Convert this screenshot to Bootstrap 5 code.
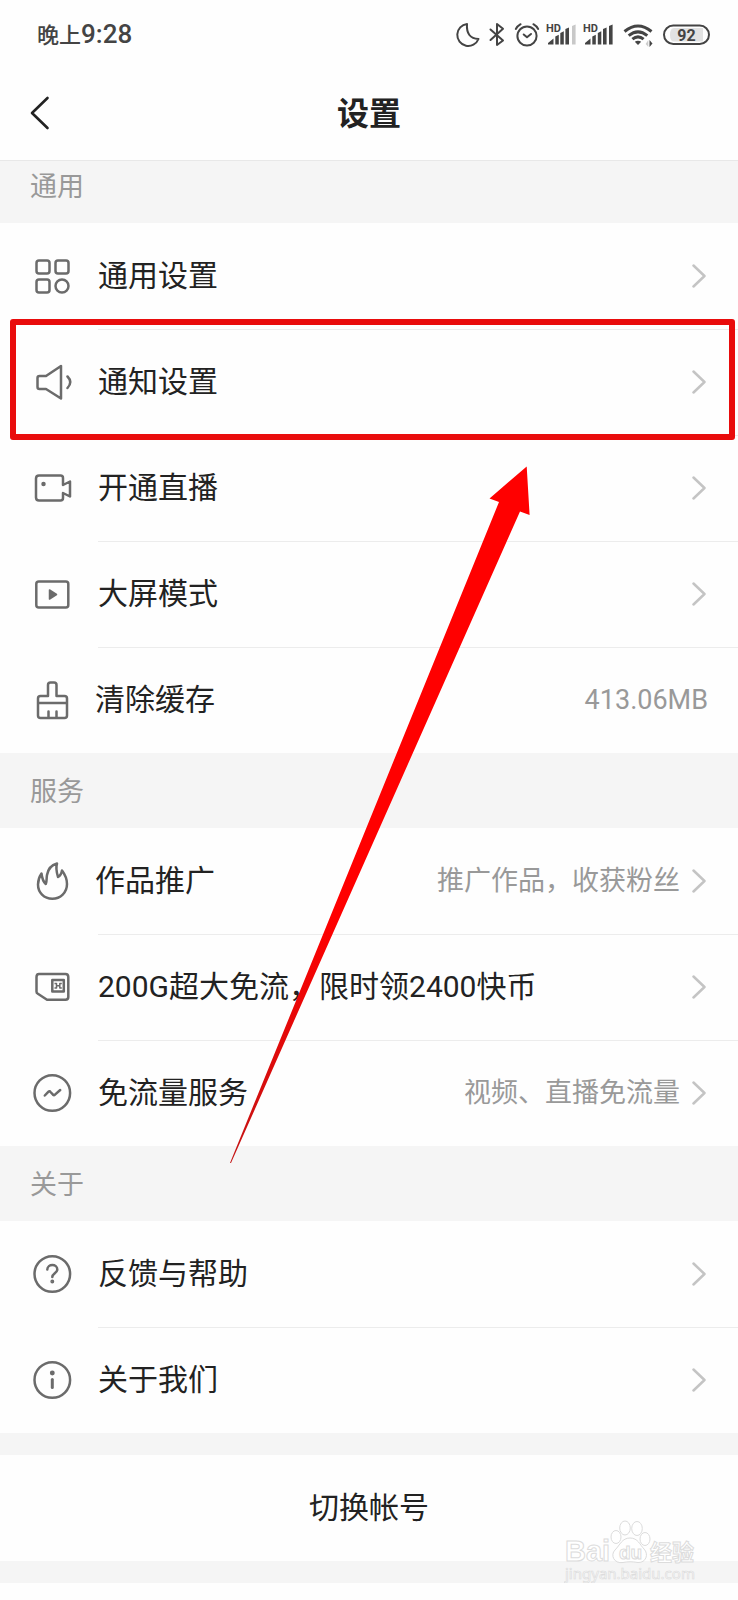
<!DOCTYPE html>
<html lang="zh-CN">
<head>
<meta charset="utf-8">
<meta name="viewport" content="width=device-width, initial-scale=1">
<title>设置</title>
<link href="https://cdn.jsdelivr.net/npm/bootstrap@5.3.0/dist/css/bootstrap.min.css" rel="stylesheet">
<style>
  body { font-family: Roboto, "Noto Sans CJK SC", sans-serif; color: #222; background: #fefefe; }
  svg { display: block; flex: none; }
  .status-bar { height: 66px; padding: 4px 28px 0 37px; color: #444; }
  .clock { font-size: 22px; font-weight: 500; line-height: 30px; }
  .clock-digits { font-size: 26px; }
  .title-bar { height: 94px; }
  .title-bar h1 { font-size: 32px; line-height: 40px; font-weight: 700; padding-top: 2px; }
  .back-btn { left: 0; top: 0; width: 80px; height: 94px; padding: 0 0 0 30px; border: 0; background: none; color: #222; }
  .group-title { height: 75px; padding: 2px 30px 0; font-size: 27px; line-height: 36px; font-weight: 400; color: #999; background: #f5f5f5; }
  .group-title-first { height: 63px; padding-bottom: 12px; border-top: 1px solid #e8e8e8; }
  .entry { height: 106px; padding: 0 32px 0 30px; gap: 24px; color: #222; text-decoration: none; width: 100%; border: 0; background: none; text-align: left; }
  .entry-action { gap: 21px; }
  .entry-value { padding-right: 30px; }
  .entry + .entry::before { content: ""; position: absolute; top: 0; left: 98px; right: 0; height: 1px; background: #ececec; }
  .entry-label { font-size: 30px; line-height: 40px; }
  .entry-note { font-size: 27px; line-height: 36px; color: #999; }
  .entry-icon { width: 44px; height: 44px; fill: none; stroke: #6b6b6b; stroke-width: 2.500; stroke-linejoin: round; stroke-linecap: round; }
  .chevron { width: 14px; height: 24px; fill: none; stroke: #c4c4c4; stroke-width: 2.500; stroke-linecap: round; stroke-linejoin: round; }
  .spacer { height: 22px; background: #f5f5f5; }
  .switch-btn { height: 106px; font-size: 30px; line-height: 40px; border: 0; background: none; color: #222; }
  .highlight { top: -10px; bottom: -5px; left: 10px; right: 3px; border: 6px solid #e90c0c; border-radius: 3px; z-index: 2; pointer-events: none; }
  .pointer-arrow { left: 229px; top: 466px; z-index: 3; pointer-events: none; }
  .watermark { right: 32px; bottom: -25px; z-index: 2; pointer-events: none; }
</style>
</head>
<body>
<div class="position-relative">
  <header>
    <div class="status-bar d-flex align-items-center justify-content-between">
      <div class="clock">晚上<span class="clock-digits">9:28</span></div>
      <svg width="254" height="30" viewBox="456 20 254 30" fill="none" stroke="#444" stroke-width="2" stroke-linecap="round" stroke-linejoin="round" role="img" aria-label="状态图标">
        <path d="M467 24A11 11 0 1 0 478.500 39Q466 38.500 467 24z"/>
        <path d="M490.500 29.500L503 40.500L497 45V24L503 28.800L490.500 40"/>
        <circle cx="527" cy="36" r="9.600"/>
        <path d="M515.800 29Q517.500 26 520.600 24.200M538.200 29Q536.500 26 533.400 24.200M523.700 34.500L527 37.300L531 34"/>
        <g stroke="none" fill="#444">
          <text x="546" y="31.500" font-family="Roboto" font-size="11" font-weight="700">HD</text>
          <path d="M548 44.500V43L553.500 38.500V44.500zM555.300 44.500V36.500L558.800 34.800V44.500zM560.300 44.500V33L563.800 31.300V44.500zM565.400 44.500V29L569 27.500V44.500z"/>
          <path fill="#c8c8c8" d="M572 44.500V26L575.600 24.500V44.500z"/>
          <text x="583" y="31.500" font-family="Roboto" font-size="11" font-weight="700">HD</text>
          <path d="M585 44.500V43L590.500 38.500V44.500zM592.300 44.500V36.500L595.800 34.800V44.500zM597.800 44.500V33L601.300 31.300V44.500zM603 44.500V29L606.600 27.500V44.500zM609 44.500V26L612.600 24.500V44.500z"/>
          <path d="M634.800 41.800Q638 39.800 641.200 41.800L638 45z"/>
          <path d="M649.500 40v7l3-3.500z"/><path fill="#ccc" d="M648.300 40v7l-2.600-3z"/>
        </g>
        <g stroke-width="3" stroke-linecap="butt"><path d="M624.500 31.500Q638 20.500 651.500 31.500M628.700 35.700Q638 28 647.300 35.700M632.400 39.200Q638 34.500 643.600 39.200"/></g>
        <rect x="664" y="25.500" width="45" height="18.500" rx="9.250"/>
        <path stroke="none" fill="#e2e2e2" d="M674 28H703V41.500H674Q670 41.500 670 34.700Q670 28 674 28z"/>
        <text x="686.500" y="40.500" text-anchor="middle" stroke="none" fill="#444" font-family="Roboto" font-size="16" font-weight="700">92</text>
      </svg>
    </div>
    <div class="title-bar position-relative d-flex align-items-center justify-content-center">
      <button type="button" class="back-btn position-absolute" aria-label="返回">
        <svg width="20" height="34" viewBox="0 0 20 34" fill="none" stroke="currentColor" stroke-width="2.600" stroke-linecap="round" stroke-linejoin="round"><path d="M17.500 2L2 17L17.500 32"/></svg>
      </button>
      <h1 class="m-0">设置</h1>
    </div>
  </header>

  <main>
    <section>
      <h2 class="group-title group-title-first d-flex align-items-center m-0">通用</h2>
      <a href="#general" class="entry position-relative d-flex align-items-center">
        <svg class="entry-icon" viewBox="0 0 44 44"><rect x="6.500" y="6.500" width="13" height="13" rx="2.500"/><rect x="25.500" y="6.500" width="13" height="13" rx="2.500"/><rect x="6.500" y="25.500" width="13" height="13" rx="2.500"/><circle cx="32" cy="32" r="6.500"/></svg>
        <span class="entry-label flex-grow-1">通用设置</span>
        <svg class="chevron" viewBox="0 0 14 24"><path d="M1.500 1.500L12.500 12L1.500 22.500"/></svg>
      </a>
      <a href="#notifications" class="entry position-relative d-flex align-items-center">
        <svg class="entry-icon" viewBox="0 0 44 44"><path d="M31 6V38.500L16 29H9.500Q7.500 29 7.500 27V18Q7.500 16 9.500 16H16zM37.500 16.500Q43 22 37.500 28"/></svg>
        <span class="entry-label flex-grow-1">通知设置</span>
        <svg class="chevron" viewBox="0 0 14 24"><path d="M1.500 1.500L12.500 12L1.500 22.500"/></svg>
        <span class="highlight position-absolute"></span>
      </a>
      <a href="#live" class="entry position-relative d-flex align-items-center">
        <svg class="entry-icon" viewBox="0 0 44 44"><path d="M33 19V12Q33 9.500 30.500 9.500H9Q6 9.500 6 12.500V31.500Q6 34.500 9 34.500H30.500Q33 34.500 33 32V27L40 30.500V15.500z"/><circle cx="13.500" cy="18" r="1" fill="#6b6b6b"/></svg>
        <span class="entry-label flex-grow-1">开通直播</span>
        <svg class="chevron" viewBox="0 0 14 24"><path d="M1.500 1.500L12.500 12L1.500 22.500"/></svg>
      </a>
      <a href="#bigscreen" class="entry position-relative d-flex align-items-center">
        <svg class="entry-icon" viewBox="0 0 44 44"><rect x="6.300" y="9.500" width="32" height="26" rx="2.500"/><path stroke-width="1.500" d="M19.500 18L26.500 22.500L19.500 27z" fill="#6b6b6b"/></svg>
        <span class="entry-label flex-grow-1">大屏模式</span>
        <svg class="chevron" viewBox="0 0 14 24"><path d="M1.500 1.500L12.500 12L1.500 22.500"/></svg>
      </a>
      <button type="button" class="entry entry-action entry-value position-relative d-flex align-items-center">
        <svg class="entry-icon" viewBox="0 0 44 44"><path d="M8 25V20.500Q8 18 10.500 18H18V7Q18 4.500 20.500 4.500H24Q26.500 4.500 26.500 7V18H34.500Q37 18 37 20.500V37.500Q37 40 34.500 40H10.500Q8 40 8 37.500V25H37M18.500 33.500V40M26.500 33.500V40"/></svg>
        <span class="entry-label flex-grow-1">清除缓存</span>
        <span class="entry-note">413.06MB</span>
      </button>
    </section>

    <section>
      <h2 class="group-title d-flex align-items-center m-0">服务</h2>
      <a href="#promote" class="entry entry-action position-relative d-flex align-items-center">
        <svg class="entry-icon" viewBox="0 0 44 44"><path d="M27 4.500C25.500 9 26.500 13 28 18C30 17 31.500 14.500 32 11.500C35 15.500 37 20 37 25C37 33.500 30.500 39.700 22.300 39.700C14 39.700 8 33.500 8 25.500C8 21 9.500 17.500 11.500 14.500C12 19 13 22.500 15.800 25C17 22 16.300 20 17 16C18 10 21.500 6 27 4.500z"/></svg>
        <span class="entry-label flex-grow-1">作品推广</span>
        <span class="d-flex align-items-center gap-2"><span class="entry-note pe-1">推广作品，收获粉丝</span>
        <svg class="chevron" viewBox="0 0 14 24"><path d="M1.500 1.500L12.500 12L1.500 22.500"/></svg></span>
      </a>
      <a href="#data-card" class="entry position-relative d-flex align-items-center">
        <svg class="entry-icon" viewBox="0 0 44 44"><path d="M9 9H35.500Q38.300 9 38.300 12V32Q38.300 34.700 35.500 34.700H17L7.500 28.500Q6.500 28 6.500 26.500V12Q6.500 9 9 9z"/><rect x="22.300" y="15" width="11.500" height="11.500"/><path stroke-width="1.500" stroke-linecap="butt" d="M24.500 18.500H26.500V23H24.500M31.800 18.500H29.800V23H31.800M26.500 20.800H29.800"/></svg>
        <span class="entry-label flex-grow-1">200G超大免流，限时领2400快币</span>
        <svg class="chevron" viewBox="0 0 14 24"><path d="M1.500 1.500L12.500 12L1.500 22.500"/></svg>
      </a>
      <a href="#free-data" class="entry position-relative d-flex align-items-center">
        <svg class="entry-icon" viewBox="0 0 44 44"><circle cx="22.300" cy="22" r="17.800"/><path d="M14.800 24.500L18.500 20.700Q19.500 19.800 20.500 21L23 23.700Q24 24.600 25 23.600L30.200 19"/></svg>
        <span class="entry-label flex-grow-1">免流量服务</span>
        <span class="d-flex align-items-center gap-2"><span class="entry-note pe-1">视频、直播免流量</span>
        <svg class="chevron" viewBox="0 0 14 24"><path d="M1.500 1.500L12.500 12L1.500 22.500"/></svg></span>
      </a>
    </section>

    <section>
      <h2 class="group-title d-flex align-items-center m-0">关于</h2>
      <a href="#help" class="entry position-relative d-flex align-items-center">
        <svg class="entry-icon" viewBox="0 0 44 44"><circle cx="22.300" cy="22" r="17.800"/><path d="M17.300 17.500C17.500 11.500 27.300 11.500 27.300 17.500C27.300 21 22.300 21.500 22.300 25"/><circle cx="22.300" cy="29.500" r=".7" fill="#6b6b6b"/></svg>
        <span class="entry-label flex-grow-1">反馈与帮助</span>
        <svg class="chevron" viewBox="0 0 14 24"><path d="M1.500 1.500L12.500 12L1.500 22.500"/></svg>
      </a>
      <a href="#about" class="entry position-relative d-flex align-items-center">
        <svg class="entry-icon" viewBox="0 0 44 44"><circle cx="22.300" cy="22" r="17.800"/><path stroke-width="3" d="M22.300 21.500V29.500"/><circle cx="22.300" cy="15" r="1.200" fill="#6b6b6b"/></svg>
        <span class="entry-label flex-grow-1">关于我们</span>
        <svg class="chevron" viewBox="0 0 14 24"><path d="M1.500 1.500L12.500 12L1.500 22.500"/></svg>
      </a>
    </section>

    <div class="spacer"></div>
    <div class="position-relative">
      <button type="button" class="switch-btn w-100 d-flex align-items-center justify-content-center">切换帐号</button>
      <svg class="watermark position-absolute" width="142" height="68" viewBox="0 0 142 68" fill="#fff" stroke="#dcdcdc" stroke-width="1" font-family="'Open Sans', 'Noto Sans CJK SC', sans-serif">
        <text x="1" y="43" font-family="'Liberation Sans', sans-serif" font-size="29" font-weight="700">Bai</text>
        <ellipse cx="52" cy="19" rx="5" ry="6.500"/><ellipse cx="61" cy="10" rx="5.300" ry="7"/><ellipse cx="73" cy="10.500" rx="5.300" ry="7"/><ellipse cx="81" cy="21" rx="5" ry="6.500"/>
        <path d="M66 20C74 20 76 27 80 31C85 36 82 45 74 44.500C68 43.500 64 43.500 59 44.500C50 46 46 37 51 32C56 27 58 20 66 20z"/>
        <text x="55" y="41" font-family="'Liberation Sans', sans-serif" font-size="19" font-weight="700">du</text>
        <text x="86" y="42" font-size="22" font-weight="700">经验</text>
        <text x="1" y="61" font-family="'Noto Sans', sans-serif" font-size="15" stroke-width=".7">jingyan.baidu.com</text>
      </svg>
    </div>
    <div class="spacer"></div>
  </main>

  <svg class="pointer-arrow position-absolute" width="302" height="698" viewBox="229 466 302 698" aria-hidden="true">
    <defs><linearGradient id="shaft" x1="0" y1="0" x2="0" y2="1"><stop offset=".65" stop-color="#f00"/><stop offset="1" stop-color="#c41414"/></linearGradient></defs>
    <path fill="url(#shaft)" d="M526.700 466.500L489.500 498.500L499 502L230 1163L231 1163L520 511.500L529.600 515z"/>
  </svg>
</div>
<script src="https://cdn.jsdelivr.net/npm/bootstrap@5.3.0/dist/js/bootstrap.bundle.min.js"></script>
</body>
</html>
